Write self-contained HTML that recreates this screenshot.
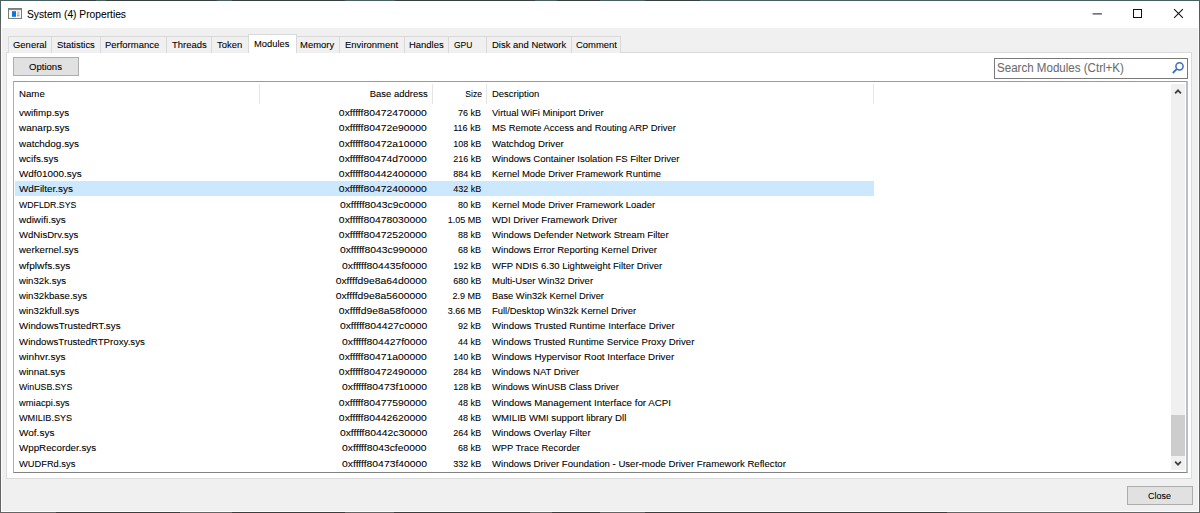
<!DOCTYPE html>
<html><head><meta charset="utf-8"><style>
*{box-sizing:border-box;margin:0;padding:0}
html,body{width:1200px;height:513px;overflow:hidden;background:#3a3a3a;font-family:"Liberation Sans",sans-serif}
.abs{position:absolute}
.t{position:absolute;white-space:pre;line-height:12px;height:12px;transform-origin:0 0;color:#000;-webkit-text-stroke-width:0.08px}
.t.r{transform-origin:100% 0}
</style></head><body>

<div class="abs" style="left:0;top:0;width:1200px;height:513px;background:#f0f0f0;border:1px solid #646464;border-top-color:#4a605e"></div>
<div class="abs" style="left:1px;top:1px;width:1198px;height:511px;border:1px solid #fbfcfd;border-top:none"></div>
<div class="abs" style="left:0;top:0;width:1px;height:26px;background:linear-gradient(#4a605e,#4a605e 70%,#646464)"></div>
<div class="abs" style="left:1199px;top:0;width:1px;height:26px;background:linear-gradient(#4a605e,#4a605e 70%,#646464)"></div>
<div class="abs" style="left:60px;top:0;width:36px;height:1px;background:#35403f"></div>
<div class="abs" style="left:106px;top:0;width:111px;height:1px;background:#35403f"></div>
<div class="abs" style="left:232px;top:0;width:113px;height:1px;background:#35403f"></div>
<div class="abs" style="left:395px;top:0;width:140px;height:1px;background:#35403f"></div>
<div class="abs" style="left:557px;top:0;width:43px;height:1px;background:#35403f"></div>
<div class="abs" style="left:645px;top:0;width:55px;height:1px;background:#35403f"></div>
<div class="abs" style="left:56px;top:512px;width:124px;height:1px;background:#3c3c3c"></div>
<div class="abs" style="left:232px;top:512px;width:113px;height:1px;background:#3c3c3c"></div>
<div class="abs" style="left:394px;top:512px;width:136px;height:1px;background:#3c3c3c"></div>
<div class="abs" style="left:552px;top:512px;width:48px;height:1px;background:#3c3c3c"></div>
<div class="abs" style="left:645px;top:512px;width:302px;height:1px;background:#3c3c3c"></div>
<div class="abs" style="left:1px;top:1px;width:1198px;height:27px;background:#fff"></div>
<svg class="abs" style="left:8px;top:8px" width="14" height="11" viewBox="0 0 14 11">
<rect x="0.5" y="0.5" width="13" height="10" fill="#f4f4f4" stroke="#7c7c7c"/>
<rect x="1" y="1" width="12" height="1.2" fill="#8a8a8a"/>
<rect x="1.5" y="2.5" width="11" height="7.5" fill="#fafafa"/>
<rect x="4" y="3.2" width="4" height="5.6" fill="#0a78d7"/>
<rect x="9" y="3.5" width="2.5" height="3.5" fill="#c8c8c8"/>
<rect x="9" y="7.3" width="2.5" height="1" fill="#808080"/>
</svg>
<div class="t" style="left:27.20px;top:7.80px;font-size:11.5px;transform:scaleX(0.89);color:#000;">System (4) Properties</div>
<svg class="abs" style="left:1090px;top:10px" width="14" height="8"><path d="M2.6 3.9H11.9" stroke="#2a2a2a" stroke-width="1.1"/></svg>
<div class="abs" style="left:1133px;top:9px;width:9px;height:9px;border:1px solid #111"></div>
<svg class="abs" style="left:1173px;top:8px" width="12" height="12" viewBox="0 0 12 12">
<path d="M1.1 1.1L9.9 9.9M9.9 1.1L1.1 9.9" stroke="#111" stroke-width="1.05" fill="none"/></svg>
<div class="abs" style="left:6px;top:52px;width:1186px;height:427px;background:#fff;border:1px solid #dadada"></div>
<div class="abs" style="left:8px;top:36px;width:44px;height:17px;background:#f0f0f0;border:1px solid #d9d9d9;border-bottom:none"></div>
<div class="abs" style="left:51px;top:36px;width:50px;height:17px;background:#f0f0f0;border:1px solid #d9d9d9;border-bottom:none"></div>
<div class="abs" style="left:100px;top:36px;width:67px;height:17px;background:#f0f0f0;border:1px solid #d9d9d9;border-bottom:none"></div>
<div class="abs" style="left:166px;top:36px;width:46px;height:17px;background:#f0f0f0;border:1px solid #d9d9d9;border-bottom:none"></div>
<div class="abs" style="left:211px;top:36px;width:38px;height:17px;background:#f0f0f0;border:1px solid #d9d9d9;border-bottom:none"></div>
<div class="abs" style="left:296px;top:36px;width:44px;height:17px;background:#f0f0f0;border:1px solid #d9d9d9;border-bottom:none"></div>
<div class="abs" style="left:339px;top:36px;width:66px;height:17px;background:#f0f0f0;border:1px solid #d9d9d9;border-bottom:none"></div>
<div class="abs" style="left:404px;top:36px;width:45px;height:17px;background:#f0f0f0;border:1px solid #d9d9d9;border-bottom:none"></div>
<div class="abs" style="left:448px;top:36px;width:39px;height:17px;background:#f0f0f0;border:1px solid #d9d9d9;border-bottom:none"></div>
<div class="abs" style="left:486px;top:36px;width:86px;height:17px;background:#f0f0f0;border:1px solid #d9d9d9;border-bottom:none"></div>
<div class="abs" style="left:571px;top:36px;width:50px;height:17px;background:#f0f0f0;border:1px solid #d9d9d9;border-bottom:none"></div>
<div class="t" style="left:12.90px;top:38.70px;font-size:9.75px;transform:scaleX(0.97);color:#000;">General</div>
<div class="t" style="left:56.50px;top:38.70px;font-size:9.75px;transform:scaleX(0.97);color:#000;">Statistics</div>
<div class="t" style="left:105.40px;top:38.70px;font-size:9.75px;transform:scaleX(0.97);color:#000;">Performance</div>
<div class="t" style="left:172.00px;top:38.70px;font-size:9.75px;transform:scaleX(0.97);color:#000;">Threads</div>
<div class="t" style="left:217.30px;top:38.70px;font-size:9.75px;transform:scaleX(0.97);color:#000;">Token</div>
<div class="t" style="left:300.00px;top:38.70px;font-size:9.75px;transform:scaleX(0.97);color:#000;">Memory</div>
<div class="t" style="left:344.50px;top:38.70px;font-size:9.75px;transform:scaleX(0.97);color:#000;">Environment</div>
<div class="t" style="left:409.20px;top:38.70px;font-size:9.75px;transform:scaleX(0.97);color:#000;">Handles</div>
<div class="t" style="left:453.80px;top:38.70px;font-size:9.75px;transform:scaleX(0.87);color:#000;">GPU</div>
<div class="t" style="left:491.50px;top:38.70px;font-size:9.75px;transform:scaleX(0.97);color:#000;">Disk and Network</div>
<div class="t" style="left:575.90px;top:38.70px;font-size:9.75px;transform:scaleX(0.97);color:#000;">Comment</div>
<div class="abs" style="left:248px;top:34px;width:49px;height:19px;background:#fff;border:1px solid #d9d9d9;border-bottom:none"></div>
<div class="t" style="left:253.80px;top:37.70px;font-size:9.75px;transform:scaleX(0.96);color:#000;">Modules</div>
<div class="abs" style="left:13px;top:57px;width:66px;height:19px;background:#e1e1e1;border:1px solid #adadad"></div>
<div class="t" style="left:29.00px;top:61.20px;font-size:9.75px;transform:scaleX(0.98);color:#000;">Options</div>
<div class="abs" style="left:994px;top:58px;width:194px;height:21px;background:#fff;border:1px solid #7a7a7a"></div>
<div class="t" style="left:997.10px;top:62.30px;font-size:12.5px;transform:scaleX(0.925);color:#6d6d6d;">Search Modules (Ctrl+K)</div>
<svg class="abs" style="left:1170px;top:61px" width="14" height="14" viewBox="0 0 14 14">
<circle cx="9.5" cy="5.3" r="3.6" stroke="#3a6fc0" stroke-width="1.5" fill="none"/>
<path d="M6.9 7.9L2.8 12" stroke="#3a6fc0" stroke-width="1.8" fill="none"/></svg>
<div class="abs" style="left:12.5px;top:81px;width:1175.5px;height:392px;background:#fff;border:1px solid #a9b0ba;border-right:2px solid #b8bfc9;border-top-color:#9a9a9a;border-bottom-color:#828282"></div>
<div class="abs" style="left:258.6px;top:84px;width:1px;height:20px;background:#e5e5e5"></div>
<div class="abs" style="left:431.9px;top:84px;width:1px;height:20px;background:#e5e5e5"></div>
<div class="abs" style="left:485.8px;top:84px;width:1px;height:20px;background:#e5e5e5"></div>
<div class="abs" style="left:873.0px;top:84px;width:1px;height:20px;background:#e5e5e5"></div>
<div class="t" style="left:19.40px;top:88.00px;font-size:9.75px;transform:scaleX(0.99);color:#000;">Name</div>
<div class="t r" style="right:772.60px;top:88.00px;font-size:9.75px;transform:scaleX(0.97);color:#000;">Base address</div>
<div class="t r" style="right:718.50px;top:88.00px;font-size:9.75px;transform:scaleX(0.88);color:#000;">Size</div>
<div class="t" style="left:492.10px;top:88.00px;font-size:9.75px;transform:scaleX(0.97);color:#000;">Description</div>
<div class="abs" style="left:15px;top:181px;width:859px;height:15px;background:#cce8ff"></div>
<div class="t" style="left:19.40px;top:107.25px;font-size:9.75px;transform:scaleX(1.004032258064516);color:#000;">vwifimp.sys</div>
<div class="t r" style="right:773.00px;top:107.25px;font-size:9.75px;transform:scaleX(1.062);color:#000;">0xfffff80472470000</div>
<div class="t r" style="right:719.00px;top:107.25px;font-size:9.75px;transform:scaleX(0.923);color:#000;">76 kB</div>
<div class="t" style="left:492.00px;top:107.25px;font-size:9.75px;transform:scaleX(0.9637931034482758);color:#000;">Virtual WiFi Miniport Driver</div>
<div class="t" style="left:19.40px;top:122.48px;font-size:9.75px;transform:scaleX(1.0246913580246912);color:#000;">wanarp.sys</div>
<div class="t r" style="right:773.00px;top:122.48px;font-size:9.75px;transform:scaleX(1.062);color:#000;">0xfffff80472e90000</div>
<div class="t r" style="right:719.00px;top:122.48px;font-size:9.75px;transform:scaleX(0.923);color:#000;">116 kB</div>
<div class="t" style="left:492.00px;top:122.48px;font-size:9.75px;transform:scaleX(0.9617801047120418);color:#000;">MS Remote Access and Routing ARP Driver</div>
<div class="t" style="left:19.40px;top:137.71px;font-size:9.75px;transform:scaleX(1.015358361774744);color:#000;">watchdog.sys</div>
<div class="t r" style="right:773.00px;top:137.71px;font-size:9.75px;transform:scaleX(1.062);color:#000;">0xfffff80472a10000</div>
<div class="t r" style="right:719.00px;top:137.71px;font-size:9.75px;transform:scaleX(0.923);color:#000;">108 kB</div>
<div class="t" style="left:492.00px;top:137.71px;font-size:9.75px;transform:scaleX(0.9930555555555556);color:#000;">Watchdog Driver</div>
<div class="t" style="left:19.40px;top:152.94px;font-size:9.75px;transform:scaleX(1.0077720207253886);color:#000;">wcifs.sys</div>
<div class="t r" style="right:773.00px;top:152.94px;font-size:9.75px;transform:scaleX(1.062);color:#000;">0xfffff80474d70000</div>
<div class="t r" style="right:719.00px;top:152.94px;font-size:9.75px;transform:scaleX(0.923);color:#000;">216 kB</div>
<div class="t" style="left:492.00px;top:152.94px;font-size:9.75px;transform:scaleX(0.9776041666666666);color:#000;">Windows Container Isolation FS Filter Driver</div>
<div class="t" style="left:19.40px;top:168.17px;font-size:9.75px;transform:scaleX(1.0129870129870129);color:#000;">Wdf01000.sys</div>
<div class="t r" style="right:773.00px;top:168.17px;font-size:9.75px;transform:scaleX(1.062);color:#000;">0xfffff80442400000</div>
<div class="t r" style="right:719.00px;top:168.17px;font-size:9.75px;transform:scaleX(0.923);color:#000;">884 kB</div>
<div class="t" style="left:492.00px;top:168.17px;font-size:9.75px;transform:scaleX(0.9689655172413792);color:#000;">Kernel Mode Driver Framework Runtime</div>
<div class="t" style="left:19.40px;top:183.40px;font-size:9.75px;transform:scaleX(1.015209125475285);color:#000;">WdFilter.sys</div>
<div class="t r" style="right:773.00px;top:183.40px;font-size:9.75px;transform:scaleX(1.062);color:#000;">0xfffff80472400000</div>
<div class="t r" style="right:719.00px;top:183.40px;font-size:9.75px;transform:scaleX(0.923);color:#000;">432 kB</div>
<div class="t" style="left:19.40px;top:198.63px;font-size:9.75px;transform:scaleX(0.8962264150943396);color:#000;">WDFLDR.SYS</div>
<div class="t r" style="right:773.00px;top:198.63px;font-size:9.75px;transform:scaleX(1.062);color:#000;">0xfffff8043c9c0000</div>
<div class="t r" style="right:719.00px;top:198.63px;font-size:9.75px;transform:scaleX(0.923);color:#000;">80 kB</div>
<div class="t" style="left:492.00px;top:198.63px;font-size:9.75px;transform:scaleX(0.9678571428571429);color:#000;">Kernel Mode Driver Framework Loader</div>
<div class="t" style="left:19.40px;top:213.86px;font-size:9.75px;transform:scaleX(1.0153508771929824);color:#000;">wdiwifi.sys</div>
<div class="t r" style="right:773.00px;top:213.86px;font-size:9.75px;transform:scaleX(1.062);color:#000;">0xfffff80478030000</div>
<div class="t r" style="right:719.00px;top:213.86px;font-size:9.75px;transform:scaleX(0.923);color:#000;">1.05 MB</div>
<div class="t" style="left:492.00px;top:213.86px;font-size:9.75px;transform:scaleX(0.9796875);color:#000;">WDI Driver Framework Driver</div>
<div class="t" style="left:19.40px;top:229.09px;font-size:9.75px;transform:scaleX(0.9818481848184818);color:#000;">WdNisDrv.sys</div>
<div class="t r" style="right:773.00px;top:229.09px;font-size:9.75px;transform:scaleX(1.062);color:#000;">0xfffff80472520000</div>
<div class="t r" style="right:719.00px;top:229.09px;font-size:9.75px;transform:scaleX(0.923);color:#000;">88 kB</div>
<div class="t" style="left:492.00px;top:229.09px;font-size:9.75px;transform:scaleX(0.9849162011173185);color:#000;">Windows Defender Network Stream Filter</div>
<div class="t" style="left:19.40px;top:244.32px;font-size:9.75px;transform:scaleX(0.9983221476510067);color:#000;">werkernel.sys</div>
<div class="t r" style="right:773.00px;top:244.32px;font-size:9.75px;transform:scaleX(1.062);color:#000;">0xfffff8043c990000</div>
<div class="t r" style="right:719.00px;top:244.32px;font-size:9.75px;transform:scaleX(0.923);color:#000;">68 kB</div>
<div class="t" style="left:492.00px;top:244.32px;font-size:9.75px;transform:scaleX(0.9785714285714286);color:#000;">Windows Error Reporting Kernel Driver</div>
<div class="t" style="left:19.40px;top:259.55px;font-size:9.75px;transform:scaleX(1.0411522633744856);color:#000;">wfplwfs.sys</div>
<div class="t r" style="right:773.00px;top:259.55px;font-size:9.75px;transform:scaleX(1.062);color:#000;">0xfffff804435f0000</div>
<div class="t r" style="right:719.00px;top:259.55px;font-size:9.75px;transform:scaleX(0.923);color:#000;">192 kB</div>
<div class="t" style="left:492.00px;top:259.55px;font-size:9.75px;transform:scaleX(0.9764367816091954);color:#000;">WFP NDIS 6.30 Lightweight Filter Driver</div>
<div class="t" style="left:19.40px;top:274.78px;font-size:9.75px;transform:scaleX(0.9873949579831932);color:#000;">win32k.sys</div>
<div class="t r" style="right:773.00px;top:274.78px;font-size:9.75px;transform:scaleX(1.062);color:#000;">0xffffd9e8a64d0000</div>
<div class="t r" style="right:719.00px;top:274.78px;font-size:9.75px;transform:scaleX(0.923);color:#000;">680 kB</div>
<div class="t" style="left:492.00px;top:274.78px;font-size:9.75px;transform:scaleX(0.9766990291262135);color:#000;">Multi-User Win32 Driver</div>
<div class="t" style="left:19.40px;top:290.01px;font-size:9.75px;transform:scaleX(0.9883381924198251);color:#000;">win32kbase.sys</div>
<div class="t r" style="right:773.00px;top:290.01px;font-size:9.75px;transform:scaleX(1.062);color:#000;">0xffffd9e8a5600000</div>
<div class="t r" style="right:719.00px;top:290.01px;font-size:9.75px;transform:scaleX(0.923);color:#000;">2.9 MB</div>
<div class="t" style="left:492.00px;top:290.01px;font-size:9.75px;transform:scaleX(0.9564102564102565);color:#000;">Base Win32k Kernel Driver</div>
<div class="t" style="left:19.40px;top:305.24px;font-size:9.75px;transform:scaleX(0.9983221476510067);color:#000;">win32kfull.sys</div>
<div class="t r" style="right:773.00px;top:305.24px;font-size:9.75px;transform:scaleX(1.062);color:#000;">0xffffd9e8a58f0000</div>
<div class="t r" style="right:719.00px;top:305.24px;font-size:9.75px;transform:scaleX(0.923);color:#000;">3.66 MB</div>
<div class="t" style="left:492.00px;top:305.24px;font-size:9.75px;transform:scaleX(0.9671140939597315);color:#000;">Full/Desktop Win32k Kernel Driver</div>
<div class="t" style="left:19.40px;top:320.47px;font-size:9.75px;transform:scaleX(1.0019880715705767);color:#000;">WindowsTrustedRT.sys</div>
<div class="t r" style="right:773.00px;top:320.47px;font-size:9.75px;transform:scaleX(1.062);color:#000;">0xfffff804427c0000</div>
<div class="t r" style="right:719.00px;top:320.47px;font-size:9.75px;transform:scaleX(0.923);color:#000;">92 kB</div>
<div class="t" style="left:492.00px;top:320.47px;font-size:9.75px;transform:scaleX(0.9972677595628415);color:#000;">Windows Trusted Runtime Interface Driver</div>
<div class="t" style="left:19.40px;top:335.70px;font-size:9.75px;transform:scaleX(0.9944707740916272);color:#000;">WindowsTrustedRTProxy.sys</div>
<div class="t r" style="right:773.00px;top:335.70px;font-size:9.75px;transform:scaleX(1.062);color:#000;">0xfffff804427f0000</div>
<div class="t r" style="right:719.00px;top:335.70px;font-size:9.75px;transform:scaleX(0.923);color:#000;">44 kB</div>
<div class="t" style="left:492.00px;top:335.70px;font-size:9.75px;transform:scaleX(0.9853658536585366);color:#000;">Windows Trusted Runtime Service Proxy Driver</div>
<div class="t" style="left:19.40px;top:350.93px;font-size:9.75px;transform:scaleX(1.0381165919282511);color:#000;">winhvr.sys</div>
<div class="t r" style="right:773.00px;top:350.93px;font-size:9.75px;transform:scaleX(1.062);color:#000;">0xfffff80471a00000</div>
<div class="t r" style="right:719.00px;top:350.93px;font-size:9.75px;transform:scaleX(0.923);color:#000;">140 kB</div>
<div class="t" style="left:492.00px;top:350.93px;font-size:9.75px;transform:scaleX(1.003867403314917);color:#000;">Windows Hypervisor Root Interface Driver</div>
<div class="t" style="left:19.40px;top:366.16px;font-size:9.75px;transform:scaleX(1.0153508771929824);color:#000;">winnat.sys</div>
<div class="t r" style="right:773.00px;top:366.16px;font-size:9.75px;transform:scaleX(1.062);color:#000;">0xfffff80472490000</div>
<div class="t r" style="right:719.00px;top:366.16px;font-size:9.75px;transform:scaleX(0.923);color:#000;">284 kB</div>
<div class="t" style="left:492.00px;top:366.16px;font-size:9.75px;transform:scaleX(0.9719101123595506);color:#000;">Windows NAT Driver</div>
<div class="t" style="left:19.40px;top:381.39px;font-size:9.75px;transform:scaleX(0.9027303754266212);color:#000;">WinUSB.SYS</div>
<div class="t r" style="right:773.00px;top:381.39px;font-size:9.75px;transform:scaleX(1.062);color:#000;">0xfffff80473f10000</div>
<div class="t r" style="right:719.00px;top:381.39px;font-size:9.75px;transform:scaleX(0.923);color:#000;">128 kB</div>
<div class="t" style="left:492.00px;top:381.39px;font-size:9.75px;transform:scaleX(0.9392592592592592);color:#000;">Windows WinUSB Class Driver</div>
<div class="t" style="left:19.40px;top:396.62px;font-size:9.75px;transform:scaleX(0.9619771863117871);color:#000;">wmiacpi.sys</div>
<div class="t r" style="right:773.00px;top:396.62px;font-size:9.75px;transform:scaleX(1.062);color:#000;">0xfffff80477590000</div>
<div class="t r" style="right:719.00px;top:396.62px;font-size:9.75px;transform:scaleX(0.923);color:#000;">48 kB</div>
<div class="t" style="left:492.00px;top:396.62px;font-size:9.75px;transform:scaleX(1.001123595505618);color:#000;">Windows Management Interface for ACPI</div>
<div class="t" style="left:19.40px;top:411.85px;font-size:9.75px;transform:scaleX(0.9346289752650176);color:#000;">WMILIB.SYS</div>
<div class="t r" style="right:773.00px;top:411.85px;font-size:9.75px;transform:scaleX(1.062);color:#000;">0xfffff80442620000</div>
<div class="t r" style="right:719.00px;top:411.85px;font-size:9.75px;transform:scaleX(0.923);color:#000;">48 kB</div>
<div class="t" style="left:492.00px;top:411.85px;font-size:9.75px;transform:scaleX(0.9874074074074075);color:#000;">WMILIB WMI support library Dll</div>
<div class="t" style="left:19.40px;top:427.08px;font-size:9.75px;transform:scaleX(1.0260115606936415);color:#000;">Wof.sys</div>
<div class="t r" style="right:773.00px;top:427.08px;font-size:9.75px;transform:scaleX(1.062);color:#000;">0xfffff80442c30000</div>
<div class="t r" style="right:719.00px;top:427.08px;font-size:9.75px;transform:scaleX(0.923);color:#000;">264 kB</div>
<div class="t" style="left:492.00px;top:427.08px;font-size:9.75px;transform:scaleX(0.9840000000000001);color:#000;">Windows Overlay Filter</div>
<div class="t" style="left:19.40px;top:442.31px;font-size:9.75px;transform:scaleX(1.0026109660574414);color:#000;">WppRecorder.sys</div>
<div class="t r" style="right:773.00px;top:442.31px;font-size:9.75px;transform:scaleX(1.062);color:#000;">0xfffff8043cfe0000</div>
<div class="t r" style="right:719.00px;top:442.31px;font-size:9.75px;transform:scaleX(0.923);color:#000;">68 kB</div>
<div class="t" style="left:492.00px;top:442.31px;font-size:9.75px;transform:scaleX(0.9565217391304348);color:#000;">WPP Trace Recorder</div>
<div class="t" style="left:19.40px;top:457.54px;font-size:9.75px;transform:scaleX(0.9539249146757679);color:#000;">WUDFRd.sys</div>
<div class="t r" style="right:773.00px;top:457.54px;font-size:9.75px;transform:scaleX(1.062);color:#000;">0xfffff80473f40000</div>
<div class="t r" style="right:719.00px;top:457.54px;font-size:9.75px;transform:scaleX(0.923);color:#000;">332 kB</div>
<div class="t" style="left:492.00px;top:457.54px;font-size:9.75px;transform:scaleX(0.9842281879194631);color:#000;">Windows Driver Foundation - User-mode Driver Framework Reflector</div>
<div class="abs" style="left:1171px;top:84px;width:14px;height:386px;background:#f0f0f0"></div>
<div class="abs" style="left:1171px;top:415px;width:14px;height:40.7px;background:#cdcdcd"></div>
<svg class="abs" style="left:1173px;top:87px" width="10" height="8" viewBox="0 0 10 8">
<path d="M2.1 6.4L5 3.4L7.9 6.4" stroke="#404040" stroke-width="1.8" fill="none"/></svg>
<svg class="abs" style="left:1173px;top:459px" width="10" height="8" viewBox="0 0 10 8">
<path d="M2.1 2.7L5 5.7L7.9 2.7" stroke="#404040" stroke-width="1.8" fill="none"/></svg>
<div class="abs" style="left:1127.4px;top:486px;width:65.6px;height:19px;background:#e1e1e1;border:1px solid #adadad"></div>
<div class="t" style="left:1147.70px;top:490.00px;font-size:9.75px;transform:scaleX(0.92);color:#000;">Close</div>
</body></html>
